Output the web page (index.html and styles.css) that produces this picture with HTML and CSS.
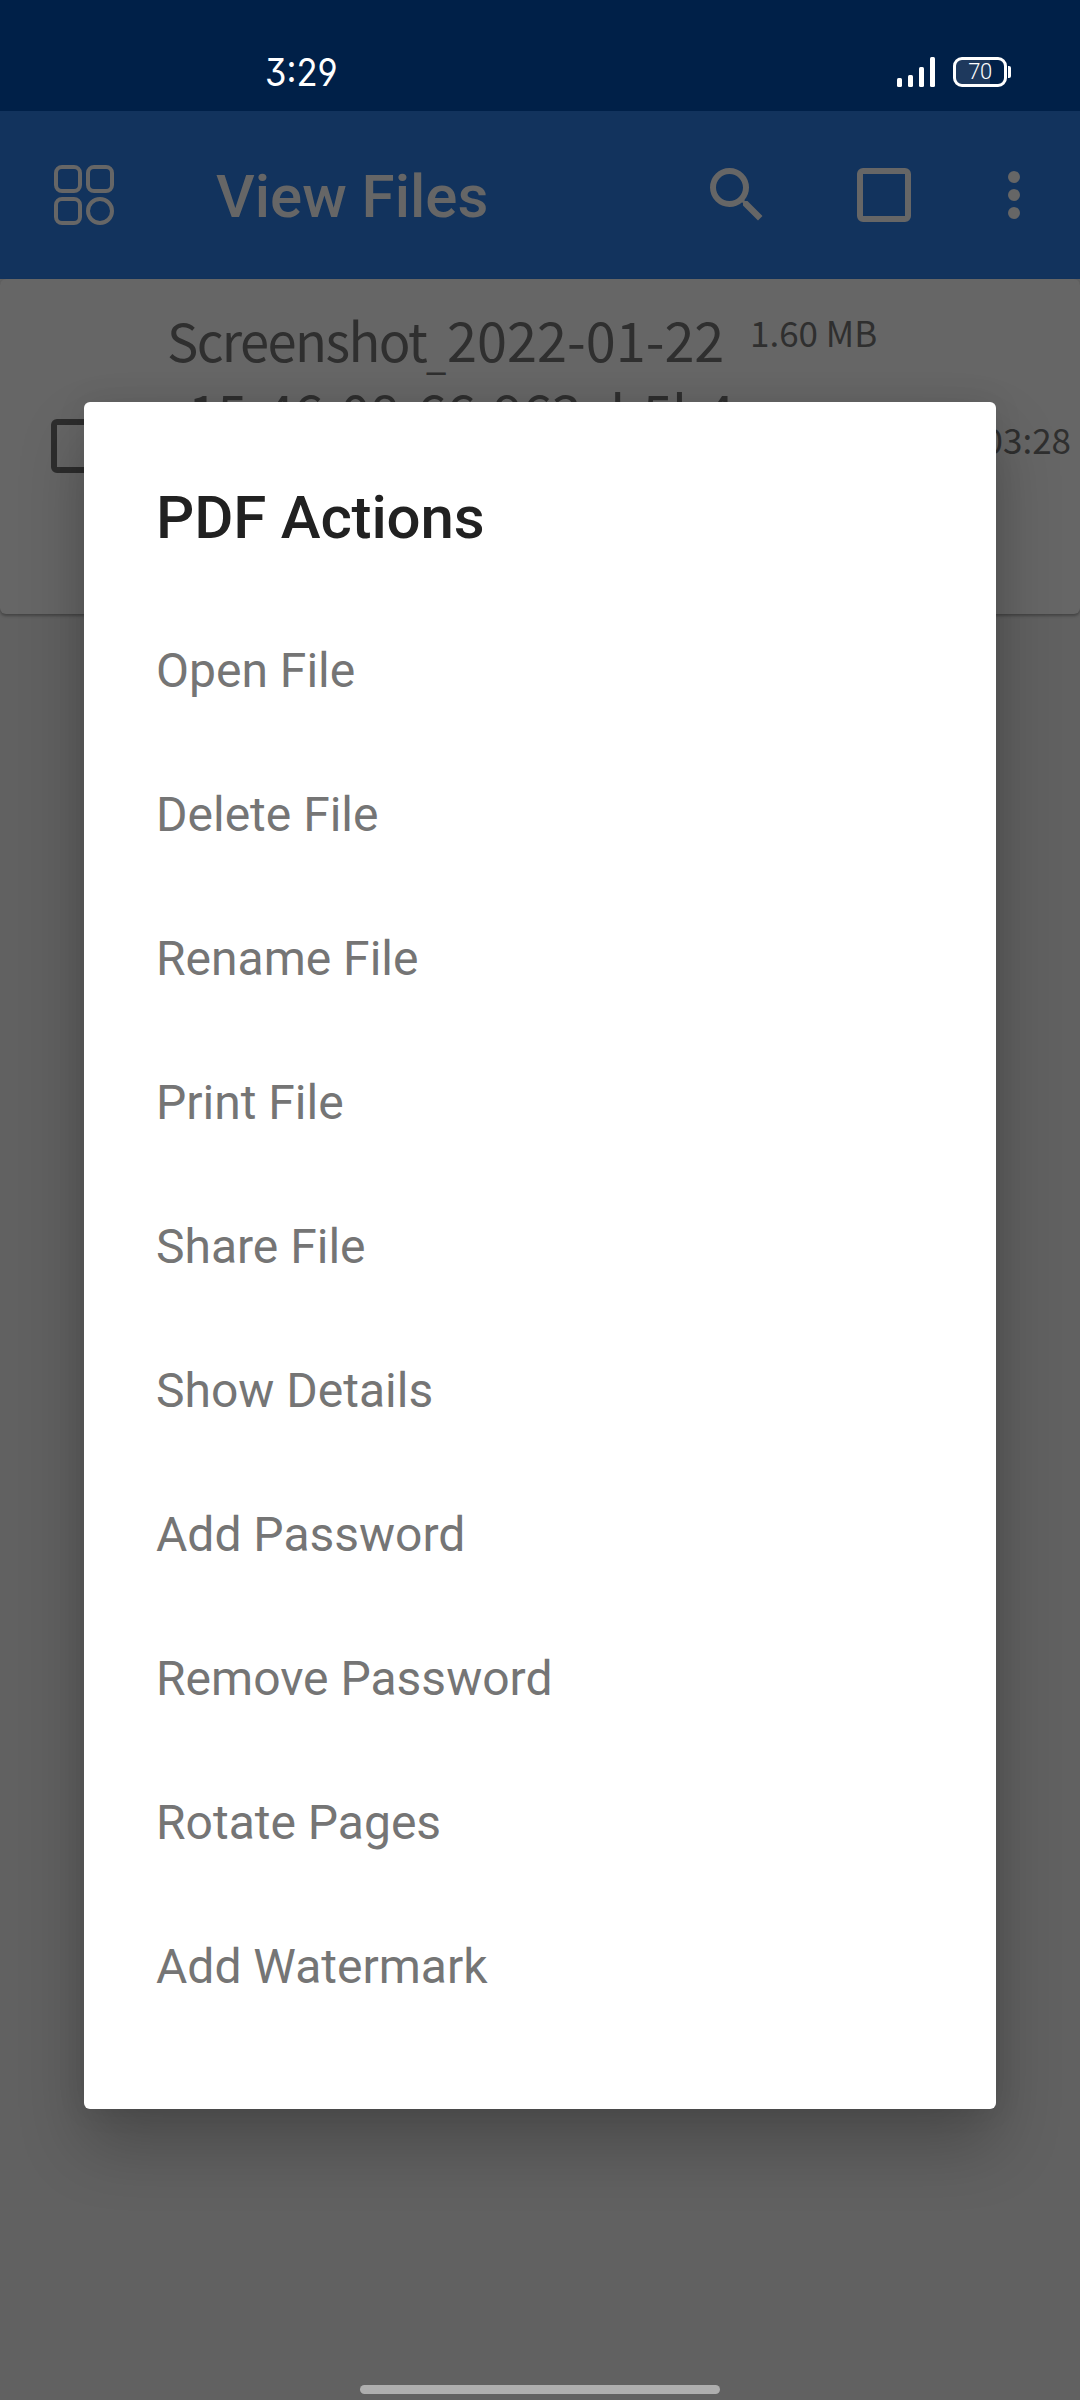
FILE: index.html
```html
<!DOCTYPE html>
<html lang="en">
<head>
<meta charset="utf-8">
<title>View Files</title>
<link rel="stylesheet" href="styles.css">
</head>
<body>
<div class="screen">
  <header class="status">
    <span class="clock">3:29</span>
    <div class="indicators">
      <svg class="signal" width="38" height="30" viewBox="0 0 38 30" fill="#fff"><rect y="21" width="5" height="9" rx="1.5"/><rect x="11" y="18" width="5" height="12" rx="1.5"/><rect x="22" y="10" width="5" height="20" rx="1.5"/><rect x="33" width="5" height="30" rx="1.5"/></svg>
      <div class="battery"><span class="level">70</span></div>
      <i class="knob"></i>
    </div>
  </header>
  <nav class="appbar">
    <svg class="apps" width="60" height="60" viewBox="0 0 60 60" fill="none" stroke="#666" stroke-width="4"><rect x="2" y="2" width="24" height="24" rx="6"/><rect x="34" y="2" width="24" height="24" rx="6"/><rect x="2" y="34" width="24" height="24" rx="6"/><circle cx="46" cy="46" r="12"/></svg>
    <h1 class="title">View Files</h1>
    <svg class="search" width="72" height="72" viewBox="0 0 24 24" fill="#666"><path d="M15.5 14h-.79l-.28-.27A6.471 6.471 0 0 0 16 9.5 6.5 6.5 0 1 0 9.5 16c1.61 0 3.09-.59 4.23-1.57l.27.28v.79l5 4.99L20.49 19l-4.99-5zm-6 0C7.01 14 5 11.99 5 9.5S7.01 5 9.5 5 14 7.01 14 9.5 11.99 14 9.5 14z"/></svg>
    <span class="box box-light"></span>
    <svg class="more" width="72" height="72" viewBox="0 0 24 24" fill="#666"><circle cx="12" cy="6" r="2"/><circle cx="12" cy="12" r="2"/><circle cx="12" cy="18" r="2"/></svg>
  </nav>
  <main class="content">
    <article class="file">
      <span class="box box-dark"></span>
      <p class="name"><span class="word">Screenshot</span><span class="dash">_</span>2022-01-22<br><span class="dash">_</span><span class="tail">15-46-08-66-963ab5b4</span></p>
      <div class="meta"><span class="size">1.60 MB</span><span class="time">03:28</span></div>
    </article>
  </main>
  <section class="dialog">
    <h2 class="heading">PDF Actions</h2>
    <ul class="actions">
      <li>Open File</li>
      <li>Delete File</li>
      <li>Rename File</li>
      <li>Print File</li>
      <li>Share File</li>
      <li>Show Details</li>
      <li>Add Password</li>
      <li>Remove Password</li>
      <li>Rotate Pages</li>
      <li>Add Watermark</li>
    </ul>
  </section>
  <div class="home"></div>
</div>
</body>
</html>
```
FILE: styles.css
```css
* { box-sizing: border-box; margin: 0; padding: 0; }
body { background: #616161; font-family: Roboto, sans-serif; }
.screen { position: relative; width: 1080px; height: 2400px; overflow: hidden; background: #616161; }
.status { display: flex; justify-content: space-between; height: 111px; padding: 57px 69px 0 265px; background: #002048; color: #fff; }
.clock { font: 400 38px/30px Inter, sans-serif; font-feature-settings: "cv09", "cv04"; transform: scaleX(.91); transform-origin: left; }
.indicators { display: flex; height: 30px; }
.battery { width: 54px; height: 30px; margin-left: 18px; border: 3px solid #fff; border-radius: 9px; background: linear-gradient(90deg, #1e395d 34px, transparent 34px); text-align: center; }
.level { display: block; font: 300 22px/24px Roboto, sans-serif; letter-spacing: -.5px; }
.knob { width: 3px; height: 12px; margin: 9px 0 0 1px; border-radius: 0 2px 2px 0; background: #fff; }
.appbar { display: flex; align-items: center; height: 168px; padding: 0 30px 0 54px; background: #12335d; color: #666; }
.title { flex: 1; margin-left: 102px; padding-top: 4px; font-size: 60px; font-weight: 500; line-height: 70px; }
.box { flex: none; width: 54px; height: 54px; border: 6px solid; border-radius: 6px; }
.box-light { margin: 0 67px 0 84px; color: #666; }
.box-dark { margin: 140px 0 0 51px; color: #2d2d2d; }
.file { display: flex; height: 335px; border-radius: 6px; background: #666; box-shadow: 0 2px 3px rgba(0,0,0,.3); color: #2f2f2f; font-family: "Noto Sans CJK SC", sans-serif; }
.name { width: 580px; margin: 24px 0 0 62px; font-size: 54px; line-height: 71.5px; white-space: nowrap; letter-spacing: 0; }
.word { font-size: 52.5px; letter-spacing: -1.6px; }
.tail { letter-spacing: -.8px; }
.dash { display: inline-block; width: 21px; font-size: 36px; font-weight: 500; line-height: 36px; transform: translateY(8px); }
.meta { flex: 1; display: flex; flex-direction: column; justify-content: space-between; height: 155px; margin: 29px 9px 0 3px; font-size: 35px; line-height: 48px; }
.time { align-self: flex-end; }
.dialog { position: absolute; left: 84px; top: 402px; width: 912px; height: 1707px; padding: 72px; border-radius: 6px; background: #fff; box-shadow: 0 36px 66px rgba(0,0,0,.24), 0 0 30px rgba(0,0,0,.08); }
.heading { padding-top: 9px; color: #212121; font-size: 60px; font-weight: 500; line-height: 70px; letter-spacing: -.15px; }
.actions { margin-top: 46px; list-style: none; color: #757575; font-size: 48px; }
.actions li { height: 144px; line-height: 144px; }
.home { position: absolute; left: 360px; bottom: 6px; width: 360px; height: 9px; border-radius: 5px; background: #aeaeae; }
```
